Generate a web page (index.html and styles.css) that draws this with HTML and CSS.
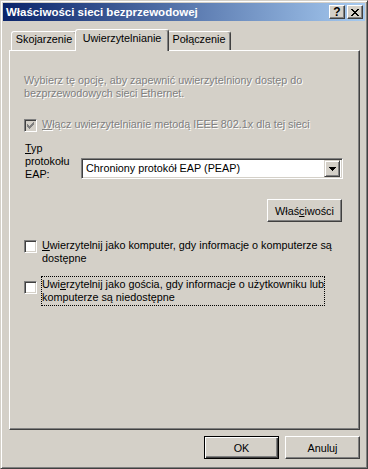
FILE: index.html
```html
<!DOCTYPE html>
<html>
<head>
	<title>Właściwości sieci bezprzewodowej</title>
	<link rel="stylesheet" href="styles.css">
</head>
<body>
	<div class="window">
		<div class="titlebar">
			<span class="title">Właściwości sieci bezprzewodowej</span>
			<div class="caption-buttons">
				<button class="cap-btn">?</button>
				<button class="cap-btn">
					<svg width="8" height="7" shape-rendering="crispEdges">
						<path d="M0 0h2v1h-2z M6 0h2v1h-2z M1 1h2v1h-2z M5 1h2v1h-2z M2 2h4v1h-4z M3 3h2v1h-2z M2 4h4v1h-4z M1 5h2v1h-2z M5 5h2v1h-2z M0 6h2v1h-2z M6 6h2v1h-2z" fill="#000"/>
					</svg>
				</button>
			</div>
		</div>

		<div class="dialog-body">
			<div class="tabs">
				<div class="tab tab-1">Skojarzenie</div>
				<div class="tab tab-2 active">Uwierzytelnianie</div>
				<div class="tab tab-3">Połączenie</div>
			</div>

			<div class="panel">
				<p class="desc disabled">Wybierz tę opcję, aby zapewnić uwierzytelniony dostęp do<br>bezprzewodowych sieci Ethernet.</p>

				<div class="check check-enable disabled">
					<span class="box box-disabled">
						<svg width="7" height="7" shape-rendering="crispEdges">
							<path d="M0 2h1v3h-1z M1 3h1v3h-1z M2 4h1v3h-1z M3 3h1v3h-1z M4 2h1v3h-1z M5 1h1v3h-1z M6 0h1v3h-1z" fill="#808080"/>
						</svg>
					</span>
					<span class="check-text"><u>W</u>łącz uwierzytelnianie metodą IEEE 802.1x dla tej sieci</span>
				</div>

				<div class="eap-row">
					<span class="eap-label"><u>T</u>yp<br>protokołu<br>EAP:</span>
					<div class="combo">
						<span class="combo-text">Chroniony protokół EAP (PEAP)</span>
						<span class="combo-btn">
							<svg width="7" height="4" shape-rendering="crispEdges">
								<path d="M0 0h7v1h-7z M1 1h5v1h-5z M2 2h3v1h-3z M3 3h1v1h-1z" fill="#000"/>
							</svg>
						</span>
					</div>
				</div>

				<div class="props-row">
					<button class="btn">Właś<u>c</u>iwości</button>
				</div>

				<div class="check check-computer">
					<span class="box"></span>
					<span class="check-text"><u>U</u>wierzytelnij jako komputer, gdy informacje o komputerze są<br>dostępne</span>
				</div>

				<div class="check check-guest">
					<span class="box"></span>
					<span class="check-text focused">Uwi<u>e</u>rzytelnij jako gościa, gdy informacje o użytkowniku lub<br>komputerze są niedostępne</span>
				</div>
			</div>

			<div class="footer">
				<button class="btn default">OK</button>
				<button class="btn">Anuluj</button>
			</div>
		</div>
	</div>
</body>
</html>
```

FILE: styles.css
```css
* {
    box-sizing: border-box;
}

body {
    margin: 0;
    background: #D4D0C8;
    font-family: "Liberation Sans", Arial, sans-serif;
    font-size: 10.8px;
    line-height: 13px;
    color: #000;
}

u {
    text-decoration: underline;
    text-underline-offset: 1px;
}

.window {
    width: 368px;
    height: 469px;
    display: flex;
    flex-direction: column;
    padding: 2px;
    background: #D4D0C8;
    border: 1px solid;
    border-color: #D4D0C8 #404040 #404040 #D4D0C8;
    box-shadow: inset 1px 1px #fff, inset -1px -1px #808080;
}

/* title bar */
.titlebar {
    height: 18px;
    display: flex;
    align-items: center;
    padding: 0 2px 0 3px;
    background: linear-gradient(to right, #0A246A, #A6CAF0);
}

.title {
    flex: 1;
    color: #fff;
    font-weight: bold;
    font-size: 11.5px;
    white-space: nowrap;
}

.caption-buttons {
    display: flex;
    gap: 2px;
}

.cap-btn {
    width: 16px;
    height: 14px;
    padding: 0;
    display: flex;
    align-items: center;
    justify-content: center;
    font-family: "Liberation Sans", Arial, sans-serif;
    font-weight: bold;
    font-size: 12px;
    line-height: 12px;
    color: #000;
    background: #D4D0C8;
    border: 1px solid;
    border-color: #fff #404040 #404040 #fff;
    box-shadow: inset -1px -1px #808080;
}

/* body */
.dialog-body {
    flex: 1;
    display: flex;
    flex-direction: column;
    padding: 8px 5px 0 6px;
}

.tabs {
    height: 21px;
    display: flex;
    align-items: flex-end;
    padding-left: 2px;
    position: relative;
    z-index: 1;
}

.tab {
    height: 19px;
    padding-top: 1px;
    text-align: center;
    white-space: nowrap;
    background: #D4D0C8;
    border: 1px solid;
    border-bottom: none;
    border-color: #fff #404040 transparent #fff;
    border-radius: 3px 3px 0 0;
    box-shadow: inset -1px 0 #808080;
}

.tab-1 { width: 66px; }
.tab-2 { width: 90px; }
.tab-3 { width: 64px; }

.tab.active {
    width: 94px;
    height: 22px;
    margin: 0 -2px -1px;
    padding-top: 2px;
    position: relative;
    z-index: 2;
}

.panel {
    height: 380px;
    padding: 23px 16px 0 14px;
    border: 1px solid;
    border-color: #fff #404040 #404040 #fff;
    box-shadow: inset -1px -1px #808080;
}

.disabled {
    color: #808080;
    text-shadow: 1px 1px #fff;
}

.desc {
    margin: 0;
}

/* checkboxes */
.check {
    display: flex;
    align-items: flex-start;
}

.check-enable {
    margin-top: 18px;
}

.check-computer {
    margin-top: 17px;
}

.check-guest {
    margin-top: 11px;
}

.box {
    width: 13px;
    height: 13px;
    flex: none;
    margin: 1px 5px 0 0;
    display: flex;
    align-items: center;
    justify-content: center;
    background: #fff;
    border: 1px solid;
    border-color: #808080 #fff #fff #808080;
    box-shadow: inset 1px 1px #404040, inset -1px -1px #D4D0C8;
}

.box-disabled {
    background: #D4D0C8;
}

.check-guest .box {
    margin-top: 5px;
}

.check-text.focused {
    margin-left: -1px;
    padding: 1px 0;
    border: 1px dotted #000;
}

/* EAP type */
.eap-row {
    display: flex;
    align-items: flex-start;
    margin-top: 10px;
}

.eap-label {
    width: 57px;
    flex: none;
    padding-left: 1px;
}

.combo {
    width: 262px;
    height: 21px;
    margin-top: 16px;
    display: flex;
    align-items: center;
    padding: 2px;
    background: #fff;
    border: 1px solid;
    border-color: #808080 #fff #fff #808080;
    box-shadow: inset 1px 1px #404040, inset -1px -1px #D4D0C8;
}

.combo-text {
    flex: 1;
    padding-left: 2px;
    white-space: nowrap;
}

.combo-btn {
    width: 16px;
    height: 17px;
    display: flex;
    align-items: center;
    justify-content: center;
    background: #D4D0C8;
    border: 1px solid;
    border-color: #D4D0C8 #404040 #404040 #D4D0C8;
    box-shadow: inset 1px 1px #fff, inset -1px -1px #808080;
}

/* buttons */
.props-row {
    display: flex;
    justify-content: flex-end;
    margin-top: 18px;
    padding-right: 1px;
}

.btn {
    width: 75px;
    height: 23px;
    padding: 0;
    font-family: "Liberation Sans", Arial, sans-serif;
    font-size: 10.8px;
    color: #000;
    background: #D4D0C8;
    border: 1px solid;
    border-color: #fff #404040 #404040 #fff;
    box-shadow: inset -1px -1px #808080;
}

.btn.default {
    border-color: #000;
    box-shadow: inset 1px 1px #fff, inset -1px -1px #404040, inset -2px -2px #808080;
}

.footer {
    display: flex;
    justify-content: flex-end;
    gap: 6px;
    margin-top: 6px;
}
```
